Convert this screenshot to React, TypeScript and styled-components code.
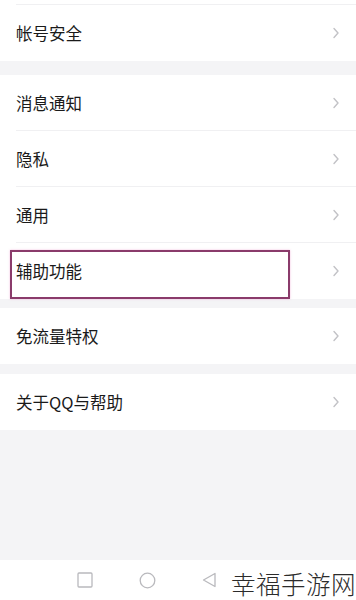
import React from 'react';
import styled, { createGlobalStyle } from 'styled-components';

const GlobalStyle = createGlobalStyle`
    html, body {
        margin: 0;
        padding: 0;
        background: #f4f4f6;
    }
    body {
        font-family: "Noto Sans CJK SC", "Noto Sans", sans-serif;
    }
`;

const Page = styled.div`
    width: 356px;
    height: 600px;
    display: flex;
    flex-direction: column;
    background: #f4f4f6;
    overflow: hidden;
`;

const Group = styled.div<{ gapAfter?: number }>`
    background: #fff;
    margin-bottom: ${(p) => p.gapAfter ?? 12}px;
`;

const TopStrip = styled.div`
    height: 4px;
    background: #fff;
    border-bottom: 1px solid #f0f0f2;
    margin-left: 16px;
`;

const Row = styled.div<{ divider?: boolean }>`
    position: relative;
    height: 56px;
    display: flex;
    align-items: center;
    justify-content: space-between;
    padding: 0 16px;
    ${(p) =>
        p.divider &&
        `
        &::after {
            content: '';
            position: absolute;
            left: 16px;
            right: 0;
            bottom: 0;
            height: 1px;
            background: #f0f0f2;
        }
    `}
`;

const Label = styled.span`
    font-size: 16.5px;
    color: #1a1a1a;
    line-height: 1;
`;

const Highlight = styled.div`
    position: absolute;
    left: 10px;
    top: 7px;
    width: 276px;
    height: 45px;
    border: 2px solid #8a3b6b;
    box-shadow: 0 0 2px rgba(230, 120, 190, 0.5);
`;

const Spacer = styled.div`
    flex: 1;
`;

const NavBar = styled.div`
    height: 40px;
    background: #fff;
    display: flex;
    align-items: center;
    position: relative;
`;

const NavIcons = styled.div`
    display: flex;
    align-items: center;
    margin-left: 77px;
    gap: 46px;
`;

const Watermark = styled.span`
    position: absolute;
    right: 0;
    top: 6px;
    font-size: 24.5px;
    color: #2b2b2b;
    letter-spacing: 0.5px;
    font-family: "Noto Sans CJK SC", sans-serif;
    font-weight: 300;
    text-shadow: 0 0 2px #fff;
`;

const Chevron = () => (
    <svg width="8" height="12" viewBox="0 0 8 12">
        <path d="M2 1.5 L6 6 L2 10.5" fill="none" stroke="#c2c2c6" strokeWidth="1.4" strokeLinecap="round" strokeLinejoin="round" />
    </svg>
);

const Item: React.FC<{ label: string; divider?: boolean; highlight?: boolean }> = ({ label, divider, highlight }) => (
    <Row divider={divider}>
        <Label>{label}</Label>
        <Chevron />
        {highlight && <Highlight />}
    </Row>
);

export default function App() {
    return (
        <Page>
            <GlobalStyle />
            <Group gapAfter={14}>
                <TopStrip />
                <Item label="帐号安全" />
            </Group>
            <Group gapAfter={9}>
                <Item label="消息通知" divider />
                <Item label="隐私" divider />
                <Item label="通用" divider />
                <Item label="辅助功能" highlight />
            </Group>
            <Group gapAfter={10}>
                <Item label="免流量特权" />
            </Group>
            <Group gapAfter={0}>
                <Item label="关于QQ与帮助" />
            </Group>
            <Spacer />
            <NavBar>
                <NavIcons>
                    <svg width="16" height="16" viewBox="0 0 16 16">
                        <rect x="1" y="1" width="14" height="14" rx="1" fill="none" stroke="#b9b9bd" strokeWidth="1.3" />
                    </svg>
                    <svg width="17" height="17" viewBox="0 0 17 17">
                        <circle cx="8.5" cy="8.5" r="7.3" fill="none" stroke="#b9b9bd" strokeWidth="1.3" />
                    </svg>
                    <svg width="14" height="16" viewBox="0 0 14 16">
                        <path d="M13 1.5 L1.5 8 L13 14.5 Z" fill="none" stroke="#b9b9bd" strokeWidth="1.3" strokeLinejoin="round" />
                    </svg>
                </NavIcons>
                <Watermark>幸福手游网</Watermark>
            </NavBar>
        </Page>
    );
}
